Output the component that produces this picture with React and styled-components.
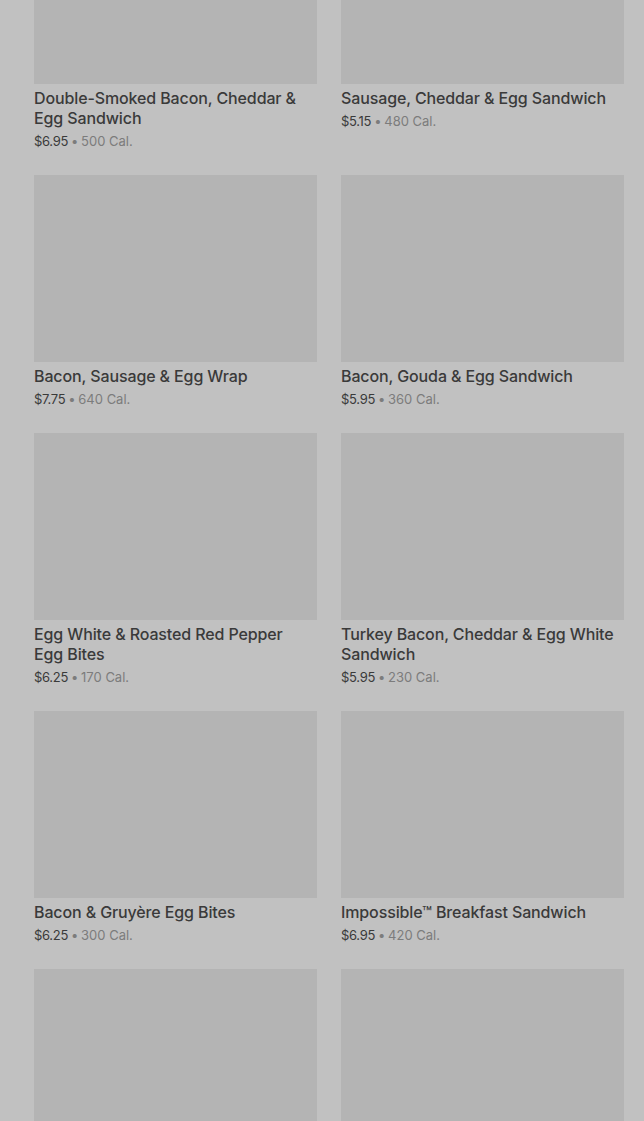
import React from 'react';
import styled, { createGlobalStyle } from 'styled-components';

const GlobalStyle = createGlobalStyle`
  html, body {
    margin: 0;
    padding: 0;
    background: #c1c1c1;
    overflow: hidden;
  }
  body {
    font-family: Inter, Roboto, "Noto Sans", "Liberation Sans", sans-serif;
  }
`;

const Page = styled.div`
  height: 1121px;
  overflow: hidden;
  padding: 0 20px 0 34px;
`;

const Grid = styled.div`
  display: grid;
  grid-template-columns: 283px 283px;
  column-gap: 24px;
  row-gap: 24px;
  margin-top: -103px;
`;

const Card = styled.div`
  display: flex;
  flex-direction: column;
`;

const Picture = styled.div`
  height: 187px;
  background: #b4b4b4;
`;

const Title = styled.div`
  margin-top: 4px;
  padding-right: 4px;
  font-size: 16px;
  line-height: 20px;
  font-weight: 500;
  color: #3a3a3a;
  letter-spacing: -0.12px;
`;

const Meta = styled.div`
  margin-top: 4px;
  height: 19px;
  font-size: 13px;
  line-height: 19px;
  color: #3a3a3a;
  letter-spacing: -0.3px;
`;

const Dot = styled.span`
  margin: 0 3px;
  color: #7c7c7c;
`;

const Cal = styled.span`
  color: #7c7c7c;
  letter-spacing: 0;
`;

const items = [
  { name: 'Double-Smoked Bacon, Cheddar & Egg Sandwich', price: '$6.95', cal: '500' },
  { name: 'Sausage, Cheddar & Egg Sandwich', price: '$5.15', cal: '480' },
  { name: 'Bacon, Sausage & Egg Wrap', price: '$7.75', cal: '640' },
  { name: 'Bacon, Gouda & Egg Sandwich', price: '$5.95', cal: '360' },
  { name: 'Egg White & Roasted Red Pepper Egg Bites', price: '$6.25', cal: '170' },
  { name: 'Turkey Bacon, Cheddar & Egg White Sandwich', price: '$5.95', cal: '230' },
  { name: 'Bacon & Gruyère Egg Bites', price: '$6.25', cal: '300' },
  { name: 'Impossible™ Breakfast Sandwich', price: '$6.95', cal: '420' },
  { name: '', price: '', cal: '' },
  { name: '', price: '', cal: '' },
];

const App = () => (
  <Page>
    <GlobalStyle />
    <Grid>
      {items.map((item, i) => (
        <Card key={i}>
          <Picture />
          {item.name && (
            <>
              <Title>{item.name}</Title>
              <Meta>
                {item.price}<Dot>•</Dot><Cal>{item.cal} Cal.</Cal>
              </Meta>
            </>
          )}
        </Card>
      ))}
    </Grid>
  </Page>
);

export default App;
